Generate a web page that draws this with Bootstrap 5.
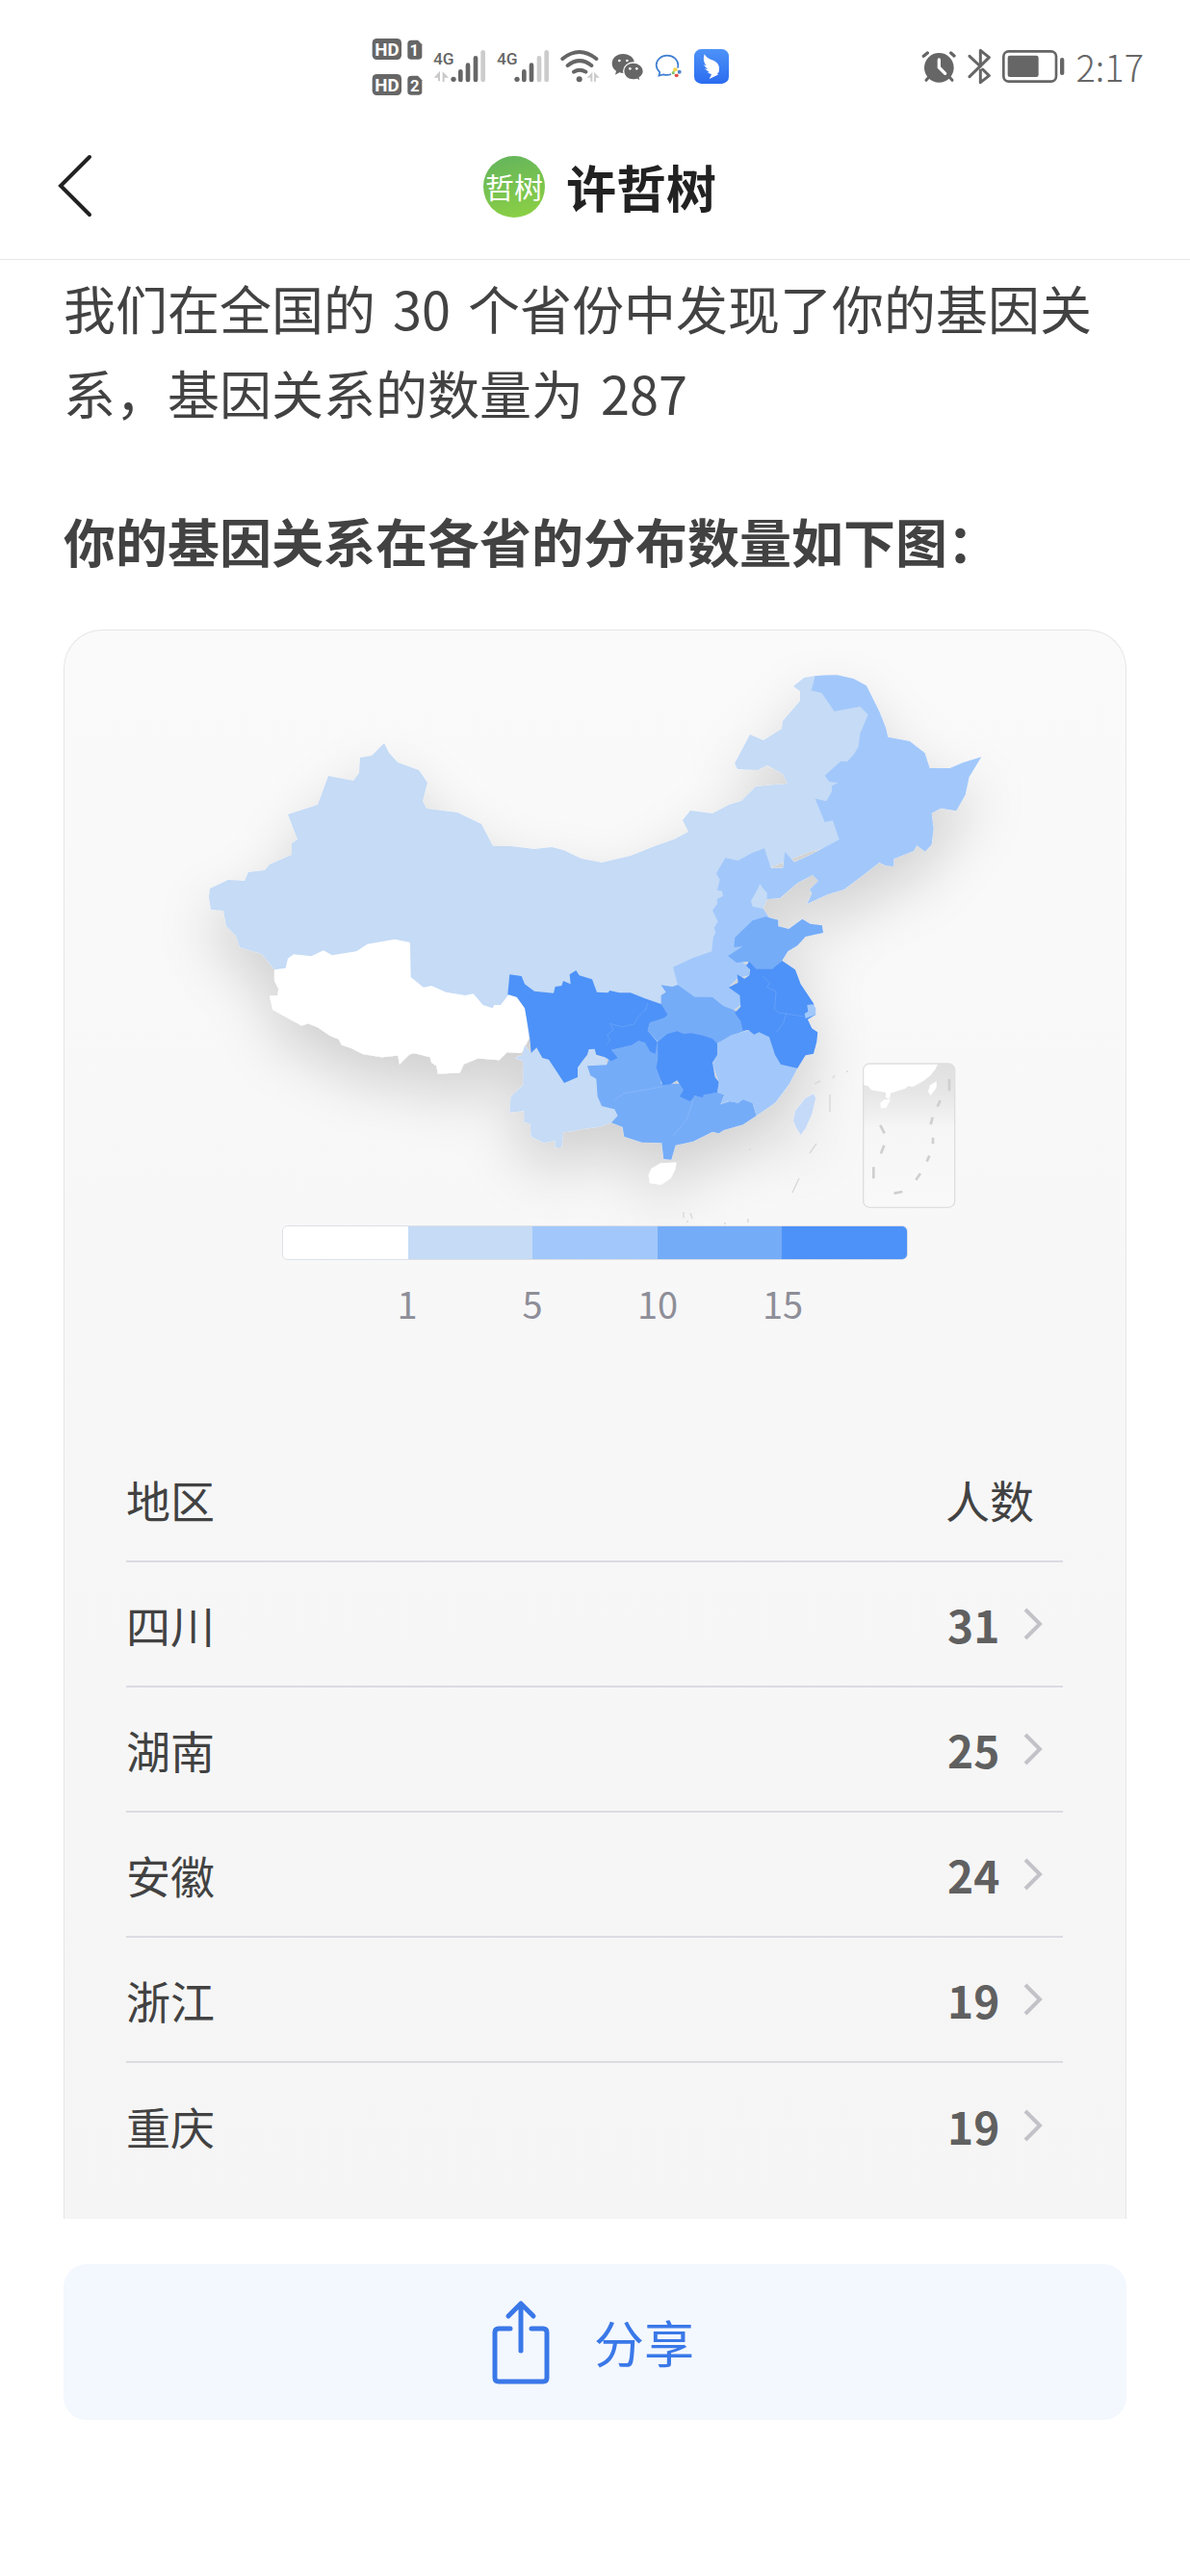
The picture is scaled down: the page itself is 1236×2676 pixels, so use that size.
<!DOCTYPE html>
<html lang="zh-CN">
<head>
<meta charset="utf-8">
<meta name="viewport" content="width=device-width, initial-scale=1">
<title>许哲树</title>
<link rel="stylesheet" href="https://cdn.jsdelivr.net/npm/bootstrap@5.3.0/dist/css/bootstrap.min.css">
<style>
  :root { --lv0:#fff; --lv1:#c5dbf6; --lv2:#a2c8fb; --lv3:#75acf8; --lv4:#4d92f8; }
  body { font-family:"Noto Sans CJK SC","Noto Sans",sans-serif; color:#424242; background:#fff; }
  svg { display:block; flex:none; }
  .status-bar { height:118px; padding:20px 48px 0 386px; color:#666; }
  .status-group { gap:11px; }
  .status-group.system-icons { gap:12px; }
  .clock { font-size:38px; line-height:40px; font-weight:300; }
  .top-nav { display:grid; grid-template-columns:1fr auto 1fr; height:152px; padding:0 48px 0 58px; border-bottom:1px solid #e6e6e6; }
  .title-group { gap:22px; }
  .avatar-dot { width:64px; height:64px; background:linear-gradient(165deg,#62b35d,#8fd243); color:#fff; font-size:30px; line-height:62px; }
  .top-title { font-size:52px; line-height:60px; color:#222; }
  .page-body { padding:6px 66px 0; }
  .intro-text { font-size:54px; line-height:88px; margin-bottom:66px; }
  .section-title { font-size:54px; line-height:88px; margin-bottom:48px; color:#424242; }
  .map-card { border:1px solid #e6e6e6; border-bottom:0; border-radius:40px 40px 0 0; background:linear-gradient(#fafafa,#f7f7f8 45%,#f5f5f5); padding-bottom:33px; }
  .legend-wrap { width:59%; }
  .legend-bar { height:36px; border-radius:6px; border:1px solid #dcdfe4; overflow:hidden; }
  .legend-scale { padding:17px 10% 0; font-size:38px; line-height:56px; color:#8e8e98; }
  .region-area { padding:110px 65px 0 64px; }
  .region-table { width:100%; font-size:46px; line-height:64px; color:#424242; }
  .region-table th, .region-table td { height:130px; padding:0; border-bottom:2px solid #dbdbe3; font-weight:400; vertical-align:middle; }
  .region-table tbody tr:last-child > * { border-bottom:0; }
  .region-table .count-col { width:122px; }
  .count-link { color:#606060; gap:24px; padding-left:2px; font-weight:700; }
  .share-btn { height:162px; margin-top:47px; margin-bottom:160px; border:0; border-radius:24px; background:#f3f7fe; color:#3a78e8; font-size:52px; line-height:64px; gap:46px; }
</style>
<script src="https://cdn.jsdelivr.net/npm/bootstrap@5.3.0/dist/js/bootstrap.bundle.min.js"></script>
</head>
<body>

<div class="status-bar d-flex align-items-center justify-content-between">
  <div class="status-group d-flex align-items-center">
    <!-- HD voice, SIM 1 and SIM 2 -->
    <svg width="53" height="61" viewBox="50 60 159 183" fill="#666" font-family="Roboto,sans-serif" font-weight="700">
      <rect x="52" y="63" width="91" height="66" rx="14"/><path d="M176 68h18l13 14v36q0 10-10 10h-25q-10 0-10-10V78q0-10 14-10z"/>
      <rect x="52" y="174" width="91" height="66" rx="14"/><path d="M176 179h18l13 14v36q0 10-10 10h-25q-10 0-10-10v-40q0-10 14-10z"/>
      <g fill="#fff" text-anchor="middle" font-size="56"><text x="98" y="116">HD</text><text x="98" y="227">HD</text><g font-size="50"><text x="183" y="116">1</text><text x="184" y="227">2</text></g></g>
    </svg>
    <!-- signal strength, SIM 1 -->
    <svg width="55" height="36" viewBox="243 93 165 108" fill="#666">
      <text x="243" y="140" font-size="52" font-family="Roboto,sans-serif" font-weight="500">4G</text>
      <path fill="#c9c9c9" d="M245 182l19-21v32h-6v-11zM291 182l-19-19v32h6v-13z"/>
      <circle cx="306" cy="187" r="8"/><g stroke="#666" stroke-width="14" stroke-linecap="round"><path d="M328 163v26M351 143v46M375 121v68"/><path stroke="#ccc" d="M398 103v86"/></g>
    </svg>
    <!-- signal strength, SIM 2 -->
    <svg width="55" height="36" viewBox="441 93 165 108" fill="#666">
      <text x="441" y="140" font-size="52" font-family="Roboto,sans-serif" font-weight="500">4G</text>
      <circle cx="504" cy="187" r="8"/><g stroke="#666" stroke-width="14" stroke-linecap="round"><path d="M526 163v26M549 143v46"/><path stroke="#ccc" d="M573 121v68M596 103v86"/></g>
    </svg>
    <!-- Wi-Fi -->
    <svg width="42" height="36" viewBox="634 93 126 108" fill="none" stroke="#666" stroke-width="12" stroke-linecap="round">
      <path d="M641 123q52-42 105 0M657 144q37-29 74 0M676 164q18-12 37 0"/><circle cx="693" cy="187" r="9" fill="#666" stroke="none"/>
      <path fill="#ccc" stroke="none" d="M717 182l17-18v30h-6v-12zM756 182l-17-18v30h6v-12z"/>
    </svg>
    <!-- WeChat -->
    <svg width="34" height="29" viewBox="783 102 102 87" fill="#666">
      <path d="M819 105c-19 0-34 13-34 30 0 10 5 18 13 23l-3 12 13-7c4 1 8 2 13 2 19 0 34-13 34-30s-15-30-36-30z"/>
      <path stroke="#fff" stroke-width="4" d="M851 132c-17 0-30 12-30 27s13 27 30 27c4 0 8-1 11-2l12 6-3-11c7-5 12-12 12-20 0-15-14-27-32-27z"/>
      <g fill="#fff"><circle cx="808" cy="126" r="4"/><circle cx="832" cy="126" r="4"/><circle cx="841" cy="151" r="4"/><circle cx="862" cy="151" r="4"/></g>
    </svg>
    <!-- work chat -->
    <svg width="30" height="26" viewBox="927 108 90 78" fill="none">
      <path stroke="#3f7fd0" stroke-width="5" d="M978 171q-11 5-24 1l-14 4 3-11q-11-11-11-22c0-17 15-30 34-30s34 13 34 30l-1 9"/>
      <circle cx="991" cy="158" r="7" fill="#f4d44c"/><circle cx="1004" cy="164" r="6" fill="#4a86c8"/><circle cx="995" cy="175" r="6" fill="#df5348"/><circle cx="985" cy="167" r="5" fill="#7cc46a"/><circle cx="994" cy="166" r="5" fill="#fff"/>
    </svg>
    <!-- bird app -->
    <svg width="36" height="36" viewBox="1056 93 108 108">
      <defs><linearGradient id="birdBg" x2="0" y2="1"><stop stop-color="#4d93f8"/><stop offset="1" stop-color="#2b6cf0"/></linearGradient></defs>
      <rect x="1056" y="93" width="108" height="108" rx="22" fill="url(#birdBg)"/>
      <path fill="#fff" d="M1088 109q10 16 28 19 17 7 18 24l-1 12-6 8h6l-30 14 7-14-14-6h8l-16-12 10 2-13-14 9 3q-13-15-6-36z"/>
    </svg>
  </div>
  <div class="status-group system-icons d-flex align-items-center">
    <!-- alarm -->
    <svg width="36" height="34" viewBox="108 96 108 102" fill="none" stroke-linecap="round">
      <circle cx="163" cy="151" r="46" fill="#666"/><path stroke="#666" stroke-width="9" d="M131 181l-8 9M196 181l8 9"/><path stroke="#666" stroke-width="10" d="M115 115l12-10M200 105l10 9"/><path stroke="#fff" stroke-width="10" d="M163 126v24l19 19"/>
    </svg>
    <!-- Bluetooth -->
    <svg width="24" height="38" viewBox="249 90 72 114" fill="none" stroke="#666" stroke-width="9" stroke-linecap="round" stroke-linejoin="round"><path d="M255 115l34 32M255 179l61-60-27-22v38M289 159v38l27-21-20-20"/></svg>
    <!-- battery -->
    <svg width="65" height="34" viewBox="360 96 195 102" fill="#666"><rect x="364" y="100" width="164" height="94" rx="16" fill="none" stroke="#666" stroke-width="8"/><rect x="377" y="113" width="96" height="67" rx="7"/><rect x="540" y="120" width="13" height="54" rx="6"/></svg>
    <span class="clock">2:17</span>
  </div>
</div>

<header class="top-nav align-items-center">
  <button type="button" class="btn p-0 border-0 text-start" aria-label="返回">
    <svg width="40" height="68" viewBox="0 0 40 68" fill="none" stroke="#222" stroke-width="4" stroke-linecap="round"><path d="M35 3L5 33l30 30"/></svg>
  </button>
  <div class="title-group d-flex align-items-center">
    <span class="avatar-dot rounded-circle text-center">哲树</span>
    <h1 class="top-title fw-bold m-0">许哲树</h1>
  </div>
</header>

<main class="page-body">
  <p class="intro-text">我们在全国的&emsp13;30&emsp13;个省份中发现了你的基因关系，基因关系的数量为&emsp13;287</p>
  <h2 class="section-title fw-bold">你的基因关系在各省的分布数量如下图：</h2>

  <section class="map-card">
    <svg class="w-100 h-auto" viewBox="67 656 1102 618" role="img" aria-label="基因关系分布地图">
      <defs>
        <filter id="landShadow" x="-20%" y="-20%" width="140%" height="150%"><feDropShadow dx="0" dy="28" stdDeviation="29" flood-color="#000" flood-opacity=".16"/></filter>
        <filter id="soft"><feGaussianBlur stdDeviation="2"/></filter>
        <linearGradient id="insetShade" x2="0" y2="1"><stop stop-color="#e0e0e0"/><stop offset=".2" stop-color="#e6e6e6"/><stop offset=".45" stop-color="#f6f6f6"/><stop offset="1" stop-color="#f9f9f9"/></linearGradient>
      </defs>
      <g filter="url(#landShadow)">
        <!-- north and north-west -->
        <path fill="var(--lv1)" d="M285 1008L272 992 249 985 245 973 235 963 232 947 219 946 217 933 218 924 237 915 254 916 258 907 275 905 280 899 303 889 303 877 309 873 299 847 330 837 341 807 367 812 373 804 374 788 386 786 399 773 404 783 413 793 435 801 444 814 439 833 443 841 475 845 500 857 512 880 530 880 555 883 573 881 585 884 604 893 625 897 655 890 680 880 700 873 715 865 709 853 717 843 740 846 757 837 770 833 785 818 818 815 813 805 797 796 787 801 766 800 763 794 779 764 793 770 812 758 813 750 831 729 831 719 824 714 835 705 847 703 904 738 900 790 880 876 840 886 800 902 786 922 780 960 740 1010 700 1060 670 1095 560 1080 500 1070 400 1030z"/>
        <!-- Tibet -->
        <path fill="var(--lv0)" transform="translate(180 640) scale(.3333)" d="M315 1105L350 1100 357 1070 375 1057 430 1063 468 1045 495 1060 570 1048 605 1025 690 1010 738 1020 740 1128 780 1160 805 1155 850 1175 910 1185 935 1180 965 1215 995 1225 1000 1215 1020 1215 1045 1183 1075 1192 1098 1230 1108 1320 1085 1365 1040 1362 1015 1387 950 1382 905 1400 893 1427 825 1430 820 1405 805 1395 800 1378 750 1365 735 1370 705 1400 700 1373 650 1378 590 1368 555 1350 525 1340 515 1322 490 1312 450 1285 420 1273 400 1280 310 1230 300 1187 325 1185 328 1165 315 1140z"/>
        <!-- north-east, Hebei and Henan -->
        <path fill="var(--lv2)" transform="translate(700 680) scale(.3333)" d="M440 70Q475 65 510 67L560 78 600 100 640 180 660 230 667 260 735 273 782 310 797 357 860 357 900 340 958 322 920 385 908 440 880 490 832 482 803 497 809 545 803 595 783 617 757 598 747 615 685 640 685 663 660 661 640 651 590 690 530 735 480 750 415 780 430 748 423 735 450 708 432 690 385 715 330 762 290 765 275 790 295 820 300 860 210 960 235 975 235 1003 200 1010 170 1040 205 1065 208 1095 185 1112 155 1098 120 1070 65 1072 12 1032-3 977 60 948 118 928 122 885 130 870 125 855 137 835 120 800 135 780 135 765 153 755 150 740 135 737 143 705 132 685 160 637 200 645 245 620 282 607 302 668 340 668 346 618 375 650 430 625 515 580 495 520 470 525 440 452 475 460 492 430 492 412 512 402 485 400 470 380 520 335 540 337 560 315 575 290 580 250 605 190 580 165 500 180 460 122 428 115z"/>
        <path fill="var(--lv1)" transform="translate(700 680) scale(.3333)" d="M268 718L280 735 290 745 290 765 278 795 245 788 240 770 255 745z"/>
        <g transform="translate(500 920) scale(.3333)">
          <!-- Yunnan -->
          <path fill="var(--lv1)" d="M105 540L128 530 135 500 155 525 172 508 190 540 210 545 258 610 300 595 300 570 330 530 335 510 353 512 358 535 390 538 390 562 340 570 350 595 370 600 370 680 425 700 425 720 405 742 365 755 310 762 285 768 255 772 250 818 230 820 230 797 195 805 155 785 152 745 133 740 133 705 88 710 92 660 130 625 130 550z"/>
          <!-- Shandong -->
          <path fill="var(--lv3)" d="M885 100L925 110 925 130 958 138 1000 107 1025 122 1062 127 1065 150 1010 162 985 190 955 208 937 237 912 262 845 262 830 240 795 243 768 222 815 192 787 195 790 165 845 112z"/>
          <!-- Hubei -->
          <path fill="var(--lv3)" d="M560 313L595 318 612 312 665 350 720 350 755 378 808 400 822 455 780 470 735 495 700 480 605 470 550 490 518 455 525 430 560 415 560 345 575 335z"/>
          <!-- Guizhou, Guangxi and Guangdong -->
          <path fill="var(--lv3)" d="M330 565L390 562 395 550 405 515 470 500 490 487 560 490 560 620 640 620 660 660 700 650 740 648 757 655 745 685 775 675 800 680 815 668 845 680 857 720 815 748 755 765 740 775 720 770 660 800 605 812 592 857 568 855 562 805 500 803 445 785 440 755 405 742 425 720 415 700 375 690 362 660 358 605 340 595z"/>
          <!-- Jiangxi and Fujian -->
          <path fill="var(--lv2)" d="M735 495L780 468 830 455 865 460 900 475 933 555 985 572 960 620 915 680 857 720 845 680 815 670 800 680 770 675 745 685 757 655 735 648 740 615 720 560 732 530z"/>
          <!-- Jiangsu, Anhui and Zhejiang -->
          <path fill="var(--lv4)" d="M835 240L855 262 908 262 937 237 978 265 995 310 1035 370 1042 405 1017 420 1030 448 1048 460 1045 490 1035 527 1010 532 985 572 933 560 915 530 897 475 865 460 850 467 832 453 815 455 808 425 790 400 808 380 805 345 770 320 800 305 797 280 820 293 835 283 837 265 825 252z"/>
          <path fill="var(--lv2)" d="M1015 375L1033 373 1042 385 1042 405 1010 417 1007 402 1018 395z"/>
          <!-- Hunan -->
          <path fill="var(--lv4)" d="M550 490L580 465 610 457 630 465 655 463 690 470 720 480 735 495 735 530 720 555 728 600 740 615 735 648 692 655 690 663 665 658 650 675 618 660 630 640 610 610 590 622 565 625 545 570 550 545z"/>
          <!-- Sichuan and Chongqing -->
          <path fill="var(--lv4)" d="M88 280L125 285 135 310 165 332 225 338 230 318 250 315 255 300 278 310 275 280 295 267 305 283 345 295 360 335 395 337 400 330 430 337 465 337 510 355 560 372 580 405 570 415 525 430 518 455 548 490 542 527 525 520 510 492 490 487 470 500 405 515 425 540 405 550 385 538 358 530 353 512 335 513 330 530 318 545 300 570 300 600 258 618 210 545 190 540 172 508 155 525 150 470 135 385 110 350 82 342z"/>
          <g fill="none" stroke="#6da6fa" stroke-width="2"><path d="M518 368l-6 22-26 25-10 20-38 8-38-10 12 20-20 15 10 18-14 12M878 285l20 22-8 12 28 14-4 56 15 10 75 12M950 400l-8 30-22 30"/><path d="M415 670l30-20 120-20M660 672l-20 60-42 50" stroke="#8cb9f9"/></g>
          <!-- Hainan and Taiwan -->
          <path fill="var(--lv0)" d="M530 885L560 868 607 866 605 885 590 915 560 935 525 930 521 905z"/>
          <path fill="#c5daf8" filter="url(#soft)" d="M1010 665L1035 652 1042 665 1030 715 1010 760 995 780 980 755 972 735 978 705z"/>
        </g>
      </g>
      <g fill="none" stroke="#dadada" stroke-width="1.5"><path d="M862 1138v18M848 1189l-7 10M830 1225l-7 15M846 1127l6-3M865 1121l2-3M879 1114h2M778 1195h2M710 1260v6M717 1261l2 6M713 1270h2M752 1272h2M777 1267v4"/></g>
      <!-- South China Sea inset -->
      <g transform="translate(800 1060) scale(.3333)">
        <rect x="290" y="138" width="285" height="448" rx="20" fill="url(#insetShade)" stroke="#dedede" stroke-width="4"/>
        <path fill="#fff" d="M292 155Q295 140 310 140H522Q510 175 460 202L445 210 430 208 420 216 400 222 375 230 372 248 360 243 360 228 315 220 305 208 292 205zM343 260L355 250 375 250 362 275 345 277zM498 205L518 193 518 212 500 237 492 225z"/>
        <path fill="none" stroke="#cfcfcf" stroke-width="8" d="M558 185v38M530 252l-9 20M506 305l-6 22M507 368v20M496 425l-8 18M468 480l-14 20M412 537l-26 5M322 460v36M355 392l-10 26M343 330l13 25"/>
      </g>
    </svg>

    <div class="legend-wrap mx-auto">
      <div class="legend-bar d-flex" aria-hidden="true">
        <div class="flex-fill" style="background:var(--lv0)"></div>
        <div class="flex-fill" style="background:var(--lv1)"></div>
        <div class="flex-fill" style="background:var(--lv2)"></div>
        <div class="flex-fill" style="background:var(--lv3)"></div>
        <div class="flex-fill" style="background:var(--lv4)"></div>
      </div>
      <div class="legend-scale row row-cols-4 g-0 text-center">
        <span>1</span><span>5</span><span>10</span><span>15</span>
      </div>
    </div>

    <div class="region-area">
      <table class="region-table">
        <thead><tr><th scope="col">地区</th><th scope="col" class="count-col">人数</th></tr></thead>
        <tbody>
          <tr><td>四川</td><td><a href="#" class="count-link d-flex align-items-center text-decoration-none">31<svg width="22" height="34" viewBox="0 0 22 34" fill="none" stroke="#c2c2c8" stroke-width="4"><path d="M3 2l15 15L3 32"/></svg></a></td></tr>
          <tr><td>湖南</td><td><a href="#" class="count-link d-flex align-items-center text-decoration-none">25<svg width="22" height="34" viewBox="0 0 22 34" fill="none" stroke="#c2c2c8" stroke-width="4"><path d="M3 2l15 15L3 32"/></svg></a></td></tr>
          <tr><td>安徽</td><td><a href="#" class="count-link d-flex align-items-center text-decoration-none">24<svg width="22" height="34" viewBox="0 0 22 34" fill="none" stroke="#c2c2c8" stroke-width="4"><path d="M3 2l15 15L3 32"/></svg></a></td></tr>
          <tr><td>浙江</td><td><a href="#" class="count-link d-flex align-items-center text-decoration-none">19<svg width="22" height="34" viewBox="0 0 22 34" fill="none" stroke="#c2c2c8" stroke-width="4"><path d="M3 2l15 15L3 32"/></svg></a></td></tr>
          <tr><td>重庆</td><td><a href="#" class="count-link d-flex align-items-center text-decoration-none">19<svg width="22" height="34" viewBox="0 0 22 34" fill="none" stroke="#c2c2c8" stroke-width="4"><path d="M3 2l15 15L3 32"/></svg></a></td></tr>
        </tbody>
      </table>
    </div>
  </section>

  <button type="button" class="share-btn btn w-100 d-flex align-items-center justify-content-center ps-0 pe-1">
    <svg width="60" height="88" viewBox="0 0 60 88" fill="none" stroke="#3a78e8" stroke-width="5" stroke-linecap="round" stroke-linejoin="round"><path d="M19 30H7q-4 0-4 4v47q0 4 4 4h46q4 0 4-4V34q0-4-4-4H41M30 53V4M17 17L30 4l13 13"/></svg>
    分享
  </button>
</main>
</body>
</html>
